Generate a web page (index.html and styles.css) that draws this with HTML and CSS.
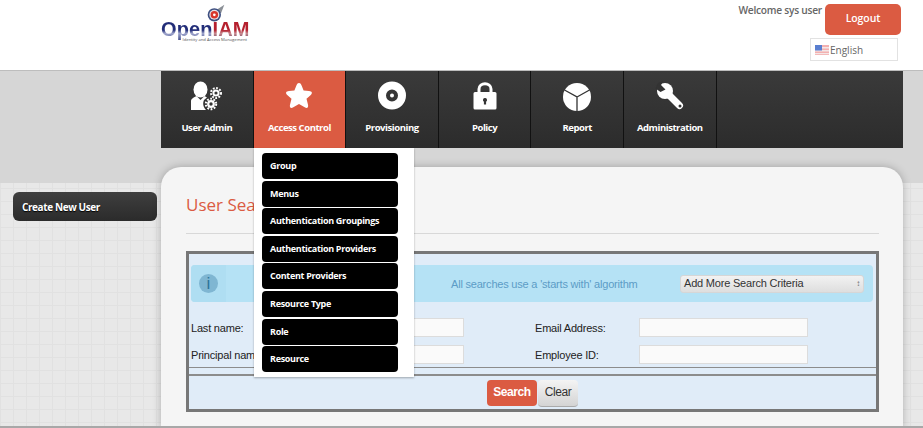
FILE: index.html
```html
<!DOCTYPE html>
<html lang="en">
<head>
	<meta charset="UTF-8">
	<title>OpenIAM</title>
	<link rel="stylesheet" href="styles.css">
</head>
<body>
<div class="page">
	<header class="header">
		<div class="logo">
			<svg class="logo-mark" viewBox="0 0 24 24" width="20" height="20">
				<path d="M11 8 L22 1 L18 11 Z" fill="#8a8f96"/>
				<circle cx="10" cy="13" r="8" fill="#3d4f80"/>
				<circle cx="10" cy="13" r="6" fill="#e8dfe4"/>
				<circle cx="10" cy="13" r="4.5" fill="#d8352c"/>
				<circle cx="10" cy="13" r="1.6" fill="#fff"/>
			</svg>
			<div class="logo-name"><span class="logo-open">Open</span><span class="logo-iam">IAM</span></div>
			<div class="logo-tag">Identity and Access Management</div>
		</div>
		<div class="user-box">
			<div class="user-row">
				<span class="welcome">Welcome sys user</span>
				<a class="logout">Logout</a>
			</div>
			<div class="lang">
				<svg class="flag" viewBox="0 0 14 10" width="14" height="10">
					<rect width="14" height="10" fill="#f3b0b0"/>
					<rect y="2" width="14" height="1.5" fill="#f4e6e6"/>
					<rect y="5" width="14" height="1.5" fill="#f4e6e6"/>
					<rect y="8" width="14" height="1.2" fill="#f4e6e6"/>
					<rect width="7" height="5.5" fill="#5a7fd0"/>
				</svg>
				English
			</div>
		</div>
	</header>

	<div class="main">
		<nav class="nav">
			<a class="nav-item">
				<svg viewBox="0 0 32 32" width="32" height="32">
					<ellipse cx="9.500" cy="9.500" rx="7" ry="8" fill="#fff"/>
					<path d="M0 30 V21 C0 18.500 3 17.500 5.500 16 L9.500 20 L13.500 16 L16 17.500 L13 20 C11.500 23 12 27 15 30 Z" fill="#fff"/>
					<circle cx="25" cy="13" r="2.600" fill="none" stroke="#fff" stroke-width="2"/>
					<circle cx="25" cy="13" r="5" fill="none" stroke="#fff" stroke-width="2" stroke-dasharray="1.800 1.500"/>
					<circle cx="20" cy="24" r="2.800" fill="none" stroke="#fff" stroke-width="2.200"/>
					<circle cx="20" cy="24" r="5.200" fill="none" stroke="#fff" stroke-width="2" stroke-dasharray="1.800 1.500"/>
				</svg>
				<span>User Admin</span>
			</a>
			<a class="nav-item active">
				<svg viewBox="0 0 32 32" width="32" height="32">
					<path d="M16 3 C17.500 3 18 4 18.800 6 L20.600 10.500 L26 11 C29 11.300 29.800 13 27.800 15 L23.500 18.800 L25 24.800 C25.700 27.800 24 28.800 21.700 27.300 L16 24 L10.300 27.300 C8 28.800 6.300 27.800 7 24.800 L8.500 18.800 L4.200 15 C2.200 13 3 11.300 6 11 L11.400 10.500 L13.200 6 C14 4 14.500 3 16 3 Z" fill="#fff"/>
				</svg>
				<span>Access Control</span>
			</a>
			<a class="nav-item">
				<svg viewBox="0 0 32 32" width="32" height="32">
					<circle cx="16" cy="15.500" r="10" fill="none" stroke="#fff" stroke-width="8"/>
					<circle cx="16" cy="15.500" r="2" fill="#fff"/>
				</svg>
				<span>Provisioning</span>
			</a>
			<a class="nav-item">
				<svg viewBox="0 0 32 32" width="32" height="32">
					<path d="M10 15 V9 C10 2 22 2 22 9 V15" fill="none" stroke="#fff" stroke-width="3"/>
					<path d="M6 12 H26 Q27.500 12 27.500 13.500 V28 Q27.500 29.500 26 29.500 H6 Q4.500 29.500 4.500 28 V13.500 Q4.500 12 6 12 Z M16 18 A2 2 0 0 0 14.900 21.700 V24.500 H17.100 V21.700 A2 2 0 0 0 16 18 Z" fill="#fff" fill-rule="evenodd"/>
				</svg>
				<span>Policy</span>
			</a>
			<a class="nav-item">
				<svg viewBox="0 0 32 32" width="32" height="32">
					<circle cx="16" cy="17" r="14" fill="#fff"/>
					<path d="M16 31 V17 L3.500 10 M16 17 L28.500 10" fill="none" stroke="#333" stroke-width="1.300"/>
				</svg>
				<span>Report</span>
			</a>
			<a class="nav-item">
				<svg viewBox="0 0 32 32" width="32" height="32">
					<circle cx="11" cy="11" r="8" fill="#fff"/>
					<path d="M12 12 L25.500 25.500" stroke="#fff" stroke-width="7" stroke-linecap="round"/>
					<path d="M11.500 9.500 L7 5 L9.500 1 L4 3 L1.500 8.500 L6.500 12 Z" fill="#333"/>
					<circle cx="26" cy="26" r="1.500" fill="#333"/>
				</svg>
				<span>Administration</span>
			</a>
			<div class="dropdown">
				<a>Group</a>
				<a>Menus</a>
				<a>Authentication Groupings</a>
				<a>Authentication Providers</a>
				<a>Content Providers</a>
				<a>Resource Type</a>
				<a>Role</a>
				<a>Resource</a>
			</div>
		</nav>

		<div class="content">
			<aside class="side">
				<a class="side-btn">Create New User</a>
			</aside>
			<section class="panel">
				<h1 class="title">User Search</h1>
				<div class="search-box">
					<div class="info-bar">
						<div class="info-icon"><span>i</span></div>
						<div class="info-text">All searches use a 'starts with' algorithm</div>
						<div class="criteria">Add More Search Criteria<span class="arrows">&#8597;</span></div>
					</div>
					<div class="fields">
						<label>Last name:</label><div class="input"></div>
						<label>Email Address:</label><div class="input"></div>
						<label>Principal name:</label><div class="input"></div>
						<label>Employee ID:</label><div class="input"></div>
					</div>
					<div class="actions">
						<a class="btn-search">Search</a>
						<a class="btn-clear">Clear</a>
					</div>
				</div>
			</section>
		</div>
	</div>
</div>
</body>
</html>
```

FILE: styles.css
```css
html, body {
	margin: 0;
	padding: 0;
}

a {
	display: block;
}

.page {
	width: 923px;
	height: 428px;
	overflow: hidden;
	font-family: "Open Sans", sans-serif;
	border-bottom: 2px solid #a8a8a8;
	box-sizing: border-box;
}

.header {
	height: 70px;
	background-color: #fff;
	border-bottom: 1px solid #bdbdbd;
	display: flex;
	justify-content: space-between;
	padding: 0 22px 0 161px;
}

.logo {
	width: 90px;
	padding-top: 4px;
	text-align: right;
}

.logo-mark {
	display: block;
	margin: 0 0 -3px 45px;
}

.logo-name {
	font-family: "Liberation Sans", sans-serif;
	font-weight: bold;
	font-size: 20px;
	line-height: 16px;
	letter-spacing: 0.1px;
	text-align: left;
	white-space: nowrap;
}

.logo-open {
	color: transparent;
	background: linear-gradient(#222d78 55%, #9fa5cc 70%, #46528f);
	-webkit-background-clip: text;
	background-clip: text;
}

.logo-iam {
	color: transparent;
	background: linear-gradient(#b5202e 55%, #c98a90 70%, #5b3350);
	-webkit-background-clip: text;
	background-clip: text;
}

.logo-tag {
	font-size: 4.2px;
	line-height: 5px;
	color: #555;
	margin-right: 4px;
	white-space: nowrap;
}

.user-box {
	display: flex;
	flex-direction: column;
	align-items: flex-end;
}

.user-row {
	display: flex;
	align-items: flex-start;
	padding-top: 4px;
}

.welcome {
	font-size: 10.2px;
	font-weight: 600;
	letter-spacing: -0.25px;
	color: #666;
	line-height: 12px;
	margin: 0 3px 0 0;
}

.logout {
	width: 76px;
	height: 31px;
	line-height: 29px;
	text-align: center;
	background-color: #db5b42;
	color: #fff;
	font-size: 10.5px;
	font-weight: 600;
	letter-spacing: -0.1px;
	border-radius: 5px;
}

.lang {
	width: 88px;
	height: 23px;
	box-sizing: border-box;
	margin: 3px 3px 0 0;
	border: 1px solid #e2e2e2;
	display: flex;
	align-items: center;
	gap: 1px;
	padding-left: 4px;
	font-size: 10px;
	color: #666;
}

.main {
	height: 357px;
	background-color: #e8e8e8;
	background-image:
		linear-gradient(#d6d6d6, #d6d6d6),
		linear-gradient(#e1e1e1 1px, transparent 1px),
		linear-gradient(90deg, #e1e1e1 1px, transparent 1px);
	background-size: 100% 112px, 13px 13px, 13px 13px;
	background-repeat: no-repeat, repeat, repeat;
}

.nav {
	margin-left: 161px;
	width: 742px;
	height: 77px;
	background: linear-gradient(#3a3a3a, #2c2c2c);
	display: flex;
	position: relative;
}

.nav-item {
	width: 92.6px;
	height: 77px;
	box-sizing: border-box;
	border-right: 1px solid #111;
	text-align: center;
	color: #fff;
	font-size: 9.5px;
	font-weight: 700;
	letter-spacing: -0.45px;
	padding-top: 9px;
}

.nav-item svg {
	display: block;
	margin: 0 auto 9px;
}

.nav-item.active {
	background-color: #db5b42;
}

.dropdown {
	position: absolute;
	left: 93px;
	top: 77px;
	width: 160px;
	height: 229px;
	box-sizing: border-box;
	background-color: #fff;
	box-shadow: 0 1px 2px rgba(0, 0, 0, 0.3);
	padding: 5px 16px 0 8px;
	z-index: 5;
}

.dropdown a {
	height: 26px;
	line-height: 25px;
	margin-bottom: 1.6px;
	padding-left: 8px;
	background-color: #000;
	color: #fff;
	font-size: 9px;
	font-weight: 700;
	letter-spacing: -0.3px;
	border-radius: 4px;
	white-space: nowrap;
}

.content {
	display: flex;
	height: 280px;
}

.side {
	width: 161px;
	padding: 44px 4px 0 13px;
	box-sizing: border-box;
}

.side-btn {
	height: 29px;
	line-height: 30px;
	padding-left: 9px;
	background: linear-gradient(#3f3f3f, #2b2b2b);
	color: #fff;
	font-size: 10px;
	font-weight: 700;
	letter-spacing: -0.4px;
	text-shadow: 0 1px 1px #000;
	border-radius: 6px;
}

.panel {
	width: 742px;
	margin-top: 19px;
	box-sizing: border-box;
	padding: 26px 24px 0 25px;
	background-color: #f5f5f5;
	border-radius: 20px 20px 0 0;
	box-shadow: 0 0 8px rgba(0, 0, 0, 0.25);
}

.title {
	margin: 0;
	height: 40px;
	font-size: 17px;
	font-weight: 400;
	line-height: 24px;
	color: #db5b42;
	border-bottom: 1px solid #d8d8d8;
}

.search-box {
	margin-top: 17px;
	height: 161px;
	box-sizing: border-box;
	border: 3px solid #777;
	background-color: #e0ecf8;
	padding-top: 11px;
	font-family: "Liberation Sans", sans-serif;
}

.info-bar {
	margin: 0 3px 0 2px;
	height: 37px;
	background-color: #b5e2f5;
	border-radius: 4px;
	display: flex;
	align-items: center;
}

.info-icon {
	width: 35px;
	height: 37px;
	background-color: #afdef2;
	border-radius: 4px 0 0 4px;
	display: flex;
	align-items: center;
	justify-content: center;
}

.info-icon span {
	width: 19px;
	height: 19px;
	line-height: 19px;
	border-radius: 50%;
	background-color: #7fb6d2;
	color: #2b7499;
	text-align: center;
	font-size: 17px;
}

.info-text {
	margin-left: 225px;
	width: 229px;
	font-size: 11px;
	letter-spacing: -0.2px;
	color: #5c9cc6;
}

.criteria {
	width: 184px;
	height: 18px;
	box-sizing: border-box;
	line-height: 15px;
	padding-left: 3px;
	background: linear-gradient(#f2f2f2, #dedede);
	border: 1px solid #d6d6d6;
	border-radius: 3px;
	font-size: 11px;
	letter-spacing: -0.2px;
	color: #333;
	display: flex;
	justify-content: space-between;
}

.arrows {
	font-size: 8px;
	padding-right: 3px;
	color: #666;
}

.fields {
	display: grid;
	grid-template-columns: 109px 164px 71px 104px 169px;
	grid-auto-rows: 19px;
	row-gap: 8px;
	margin-top: 16px;
	padding-left: 2px;
	height: 49px;
	border-bottom: 1px solid #8c8c8c;
}

.fields label {
	font-size: 11px;
	letter-spacing: -0.2px;
	line-height: 21px;
	color: #222;
	white-space: nowrap;
}

.fields label:nth-of-type(even) {
	grid-column: 4;
}

.input {
	background-color: #fafafa;
	border: 1px solid #dcdcdc;
	box-sizing: border-box;
}

.actions {
	border-top: 2px solid #8c8c8c;
	margin-top: 6px;
	padding-top: 4px;
	display: flex;
	justify-content: flex-start;
	padding-left: 298px;
}

.btn-search, .btn-clear {
	height: 26px;
	line-height: 25px;
	text-align: center;
	font-size: 12px;
	letter-spacing: -0.4px;
	border-radius: 4px;
}

.btn-search {
	width: 50px;
	background-color: #db5b42;
	color: #fff;
	font-weight: bold;
}

.btn-clear {
	width: 40px;
	margin-left: 1px;
	color: #333;
	background: linear-gradient(#f4f4f4, #d4d4d4);
	border-bottom: 1px solid #aaa;
}
```
